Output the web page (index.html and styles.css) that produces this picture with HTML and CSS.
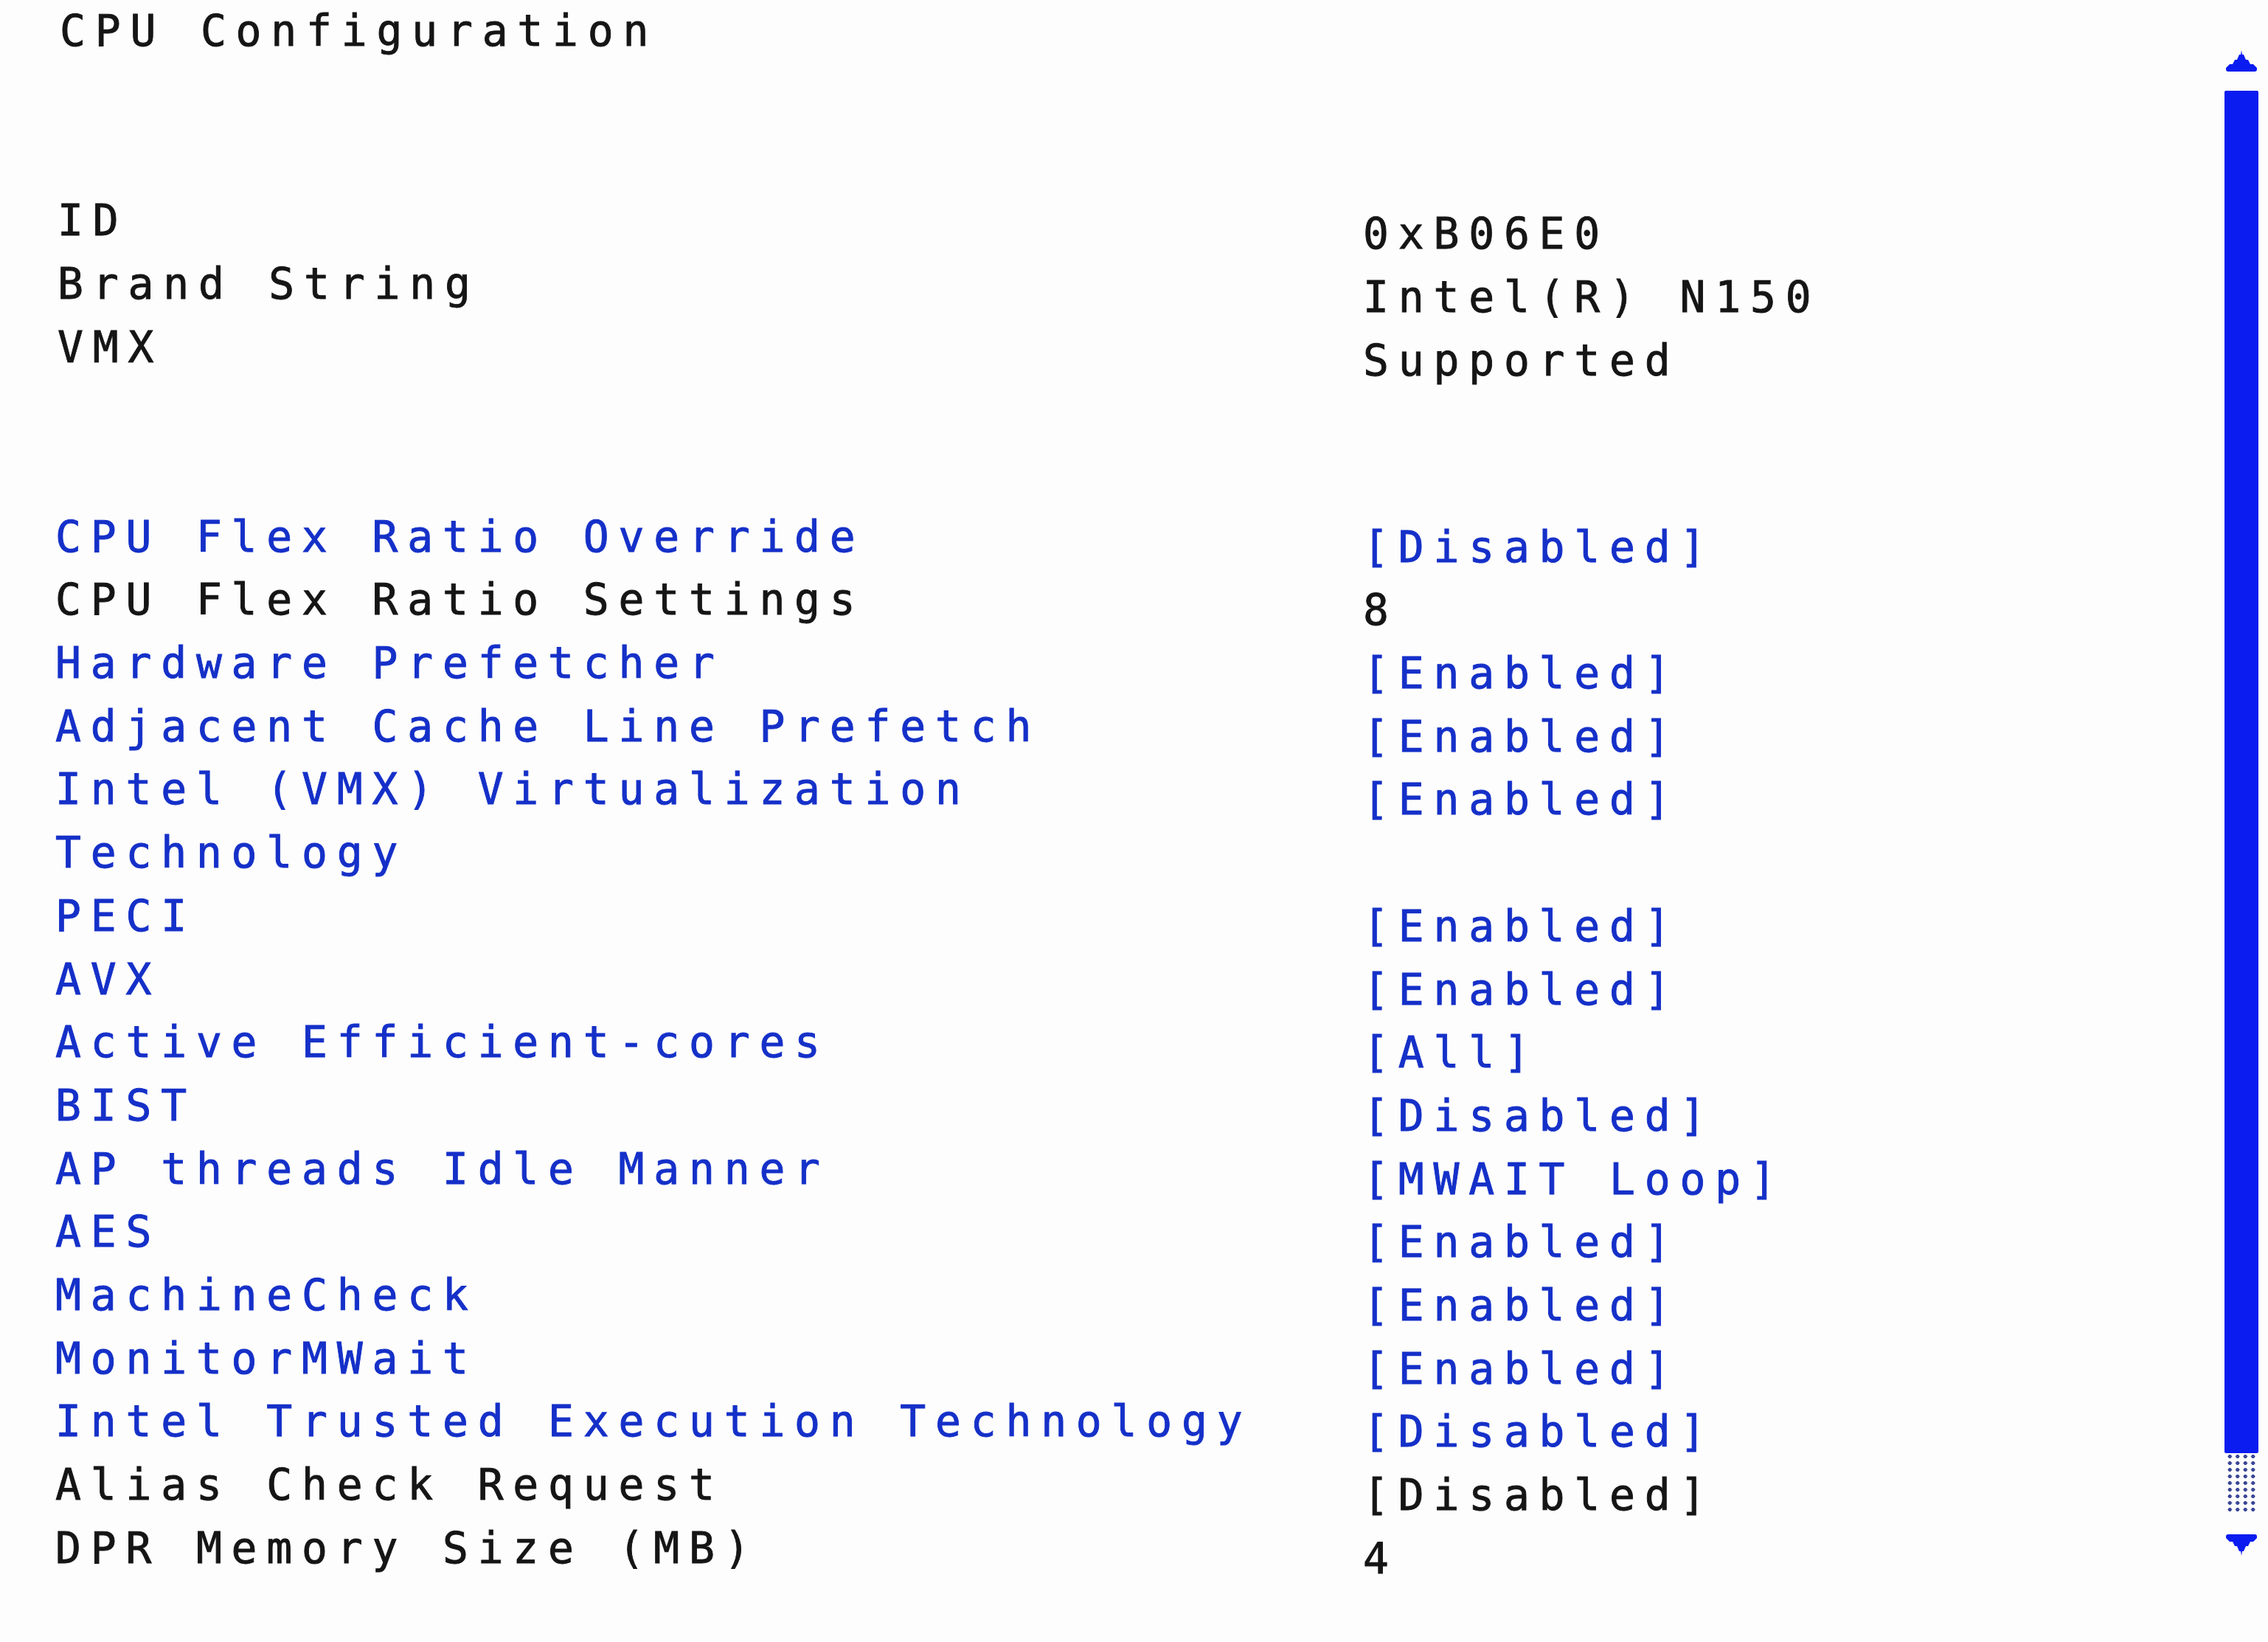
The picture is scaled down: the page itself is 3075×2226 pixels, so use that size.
FILE: index.html
```html
<!DOCTYPE html>
<html lang="en">
<head>
<meta charset="utf-8">
<title>CPU Configuration</title>
<link rel="stylesheet" href="styles.css">
</head>
<body>
<div class="screen">
  <main class="content">
    <div class="title">CPU Configuration</div>

    <div class="grid info">
      <div class="label">ID</div><div class="value">0xB06E0</div>
      <div class="label">Brand String</div><div class="value">Intel(R) N150</div>
      <div class="label">VMX</div><div class="value">Supported</div>
    </div>

    <div class="grid list">
      <div class="label sel">CPU Flex Ratio Override</div><div class="value sel">[Disabled]</div>
      <div class="label">CPU Flex Ratio Settings</div><div class="value">8</div>
      <div class="label sel">Hardware Prefetcher</div><div class="value sel">[Enabled]</div>
      <div class="label sel">Adjacent Cache Line Prefetch</div><div class="value sel">[Enabled]</div>
      <div class="label sel">Intel (VMX) Virtualization Technology</div><div class="value sel">[Enabled]</div>
      <div class="label sel">PECI</div><div class="value sel">[Enabled]</div>
      <div class="label sel">AVX</div><div class="value sel">[Enabled]</div>
      <div class="label sel">Active Efficient-cores</div><div class="value sel">[All]</div>
      <div class="label sel">BIST</div><div class="value sel">[Disabled]</div>
      <div class="label sel">AP threads Idle Manner</div><div class="value sel">[MWAIT Loop]</div>
      <div class="label sel">AES</div><div class="value sel">[Enabled]</div>
      <div class="label sel">MachineCheck</div><div class="value sel">[Enabled]</div>
      <div class="label sel">MonitorMWait</div><div class="value sel">[Enabled]</div>
      <div class="label sel">Intel Trusted Execution Technology</div><div class="value sel">[Disabled]</div>
      <div class="label">Alias Check Request</div><div class="value">[Disabled]</div>
      <div class="label">DPR Memory Size (MB)</div><div class="value">4</div>
    </div>
  </main>

  <aside class="scrollbar">
    <svg class="arrow" viewBox="0 0 42 32" aria-hidden="true">
      <path d="M3 32 H39 Q42 32 42 29 V27 L37 22 H33 L30 16 H27 L24 9 H22 L21 3 L20 9 H18 L15 16 H12 L9 22 H5 L0 27 V29 Q0 32 3 32 Z" fill="#0b1cf0"/>
    </svg>
    <div class="thumb"></div>
    <div class="track"></div>
    <svg class="arrow down" viewBox="0 0 42 32" aria-hidden="true">
      <path d="M3 32 H39 Q42 32 42 29 V27 L37 22 H33 L30 16 H27 L24 9 H22 L21 3 L20 9 H18 L15 16 H12 L9 22 H5 L0 27 V29 Q0 32 3 32 Z" fill="#0b1cf0"/>
    </svg>
  </aside>
</div>
</body>
</html>
```

FILE: styles.css
```css
html, body {
  margin: 0;
  padding: 0;
  background: #fdfdfd;
}

body {
  width: 3075px;
  height: 2226px;
  overflow: hidden;
  font-family: "DejaVu Sans Mono", "Liberation Mono", monospace;
  font-size: 58px;
  letter-spacing: 12.8px;
  line-height: 85.7px;
  color: #151515;
  -webkit-text-stroke: 0.9px currentColor;
}

.screen {
  display: flex;
  height: 100%;
}

.content {
  flex: 1;
  padding-left: 75px;
}

.title {
  white-space: nowrap;
  padding-left: 6px;
}

.grid {
  display: grid;
  grid-template-columns: 1700px 1fr;
  column-gap: 73px;
  margin-top: 171.4px;
}

.label {
  white-space: normal;
}

.value {
  white-space: nowrap;
}

.info .label {
  padding-left: 3px;
}

.info .value {
  margin-top: 18px;
  margin-bottom: -18px;
}

.list .value {
  margin-top: 14px;
  margin-bottom: -14px;
}

.sel {
  color: #1530c8;
}

.scrollbar {
  width: 47px;
  margin-right: 13px;
  padding-top: 65px;
  display: flex;
  flex-direction: column;
  align-items: center;
}

.arrow {
  width: 42px;
  height: 32px;
  display: block;
}

.arrow.down {
  transform: scaleY(-1);
  margin-top: 27px;
}

.thumb {
  margin-top: 26px;
  width: 46px;
  height: 1847px;
  background: #0b1cf0;
  border-radius: 2px;
}

.track {
  width: 42px;
  height: 83px;
  background-color: #fdfdfd;
  background-image: radial-gradient(ellipse 3px 2.4px at 50% 50%, #3b4796 90%, transparent 100%);
  background-size: 10.5px 9px;
}
```
